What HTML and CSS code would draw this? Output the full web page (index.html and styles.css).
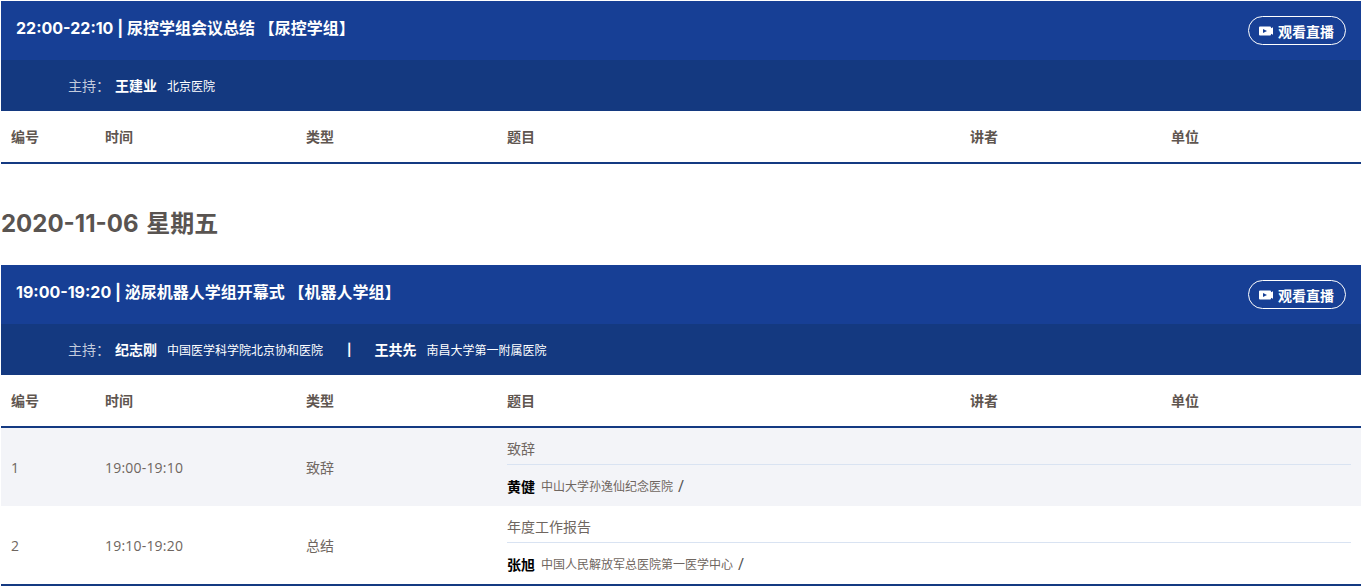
FILE: index.html
```html
<!DOCTYPE html>
<html lang="zh-CN">
<head>
<meta charset="utf-8">
<title>日程</title>
<link rel="stylesheet" href="styles.css">
</head>
<body>
<main class="page">
  <section class="session">
    <div class="session-head">
      <h3 class="session-title">22:00-22:10 | 尿控学组会议总结 【尿控学组】</h3>
      <a class="live" href="#"><svg class="live-icon" viewBox="0 0 14 10"><path fill="#fff" fill-rule="evenodd" d="M1 .5h10a1 1 0 0 1 1 1v.7l2-1v7.600l-2-1v.7a1 1 0 0 1-1 1H1a1 1 0 0 1-1-1v-7a1 1 0 0 1 1-1zM4 3v4l4-2z"/></svg>观看直播</a>
    </div>
    <div class="hosts">
      <span class="hosts-label">主持：</span>
      <b class="host-name">王建业</b><span class="host-org">北京医院</span>
    </div>
    <div class="grid head-row">
      <div class="cell">编号</div><div class="cell">时间</div><div class="cell">类型</div><div class="cell">题目</div><div class="cell">讲者</div><div class="cell">单位</div>
    </div>
  </section>

  <h2 class="date">2020-11-06 星期五</h2>

  <section class="session">
    <div class="session-head">
      <h3 class="session-title">19:00-19:20 | 泌尿机器人学组开幕式 【机器人学组】</h3>
      <a class="live" href="#"><svg class="live-icon" viewBox="0 0 14 10"><path fill="#fff" fill-rule="evenodd" d="M1 .5h10a1 1 0 0 1 1 1v.7l2-1v7.600l-2-1v.7a1 1 0 0 1-1 1H1a1 1 0 0 1-1-1v-7a1 1 0 0 1 1-1zM4 3v4l4-2z"/></svg>观看直播</a>
    </div>
    <div class="hosts">
      <span class="hosts-label">主持：</span>
      <b class="host-name">纪志刚</b><span class="host-org">中国医学科学院北京协和医院</span>
      <span class="host-sep">|</span>
      <b class="host-name">王共先</b><span class="host-org">南昌大学第一附属医院</span>
    </div>
    <div class="grid head-row">
      <div class="cell">编号</div><div class="cell">时间</div><div class="cell">类型</div><div class="cell">题目</div><div class="cell">讲者</div><div class="cell">单位</div>
    </div>
    <div class="grid row row-alt">
      <div class="cell">1</div><div class="cell time">19:00-19:10</div><div class="cell">致辞</div>
      <div class="topic">
        <div class="topic-title">致辞</div>
        <div class="speaker"><b class="speaker-name">黄健</b><span class="speaker-org">中山大学孙逸仙纪念医院</span><span class="slash">/</span></div>
      </div>
    </div>
    <div class="grid row row-last">
      <div class="cell">2</div><div class="cell time">19:10-19:20</div><div class="cell">总结</div>
      <div class="topic">
        <div class="topic-title">年度工作报告</div>
        <div class="speaker"><b class="speaker-name">张旭</b><span class="speaker-org">中国人民解放军总医院第一医学中心</span><span class="slash">/</span></div>
      </div>
    </div>
  </section>
</main>
</body>
</html>
```
FILE: styles.css
```css
* { box-sizing: border-box; }
html, body { margin: 0; padding: 0; background: #fff; overflow: hidden; }
body {
  font-family: Inter, "Noto Sans CJK SC", sans-serif;
  font-size: 13px;
  color: #5f5650;
}
.page { width: 1360px; margin: 1px 0 0 1px; }
.session-head {
  height: 59px;
  background: #173f95;
  display: flex;
  justify-content: space-between;
  padding: 0 15px;
  color: #fff;
}
.session-title { margin: 16px 0 0; font-size: 16px; line-height: 22px; font-weight: 700; }
.live {
  margin-top: 15px;
  height: 29px;
  width: 98px;
  border: 1px solid #fff;
  border-radius: 15px;
  display: flex;
  align-items: center;
  justify-content: center;
  color: #fff;
  font-size: 14px;
  font-weight: 700;
  text-decoration: none;
}
.live-icon { width: 14px; height: 10px; margin-right: 5px; margin-left: -1px; }
.hosts {
  height: 51px;
  background: #143980;
  display: flex;
  align-items: center;
  padding-left: 67px;
  color: #fff;
  font-size: 12px;
}
.hosts-label { font-size: 14px; color: #c2cbdd; width: 47px; margin-bottom: 2px; }
.host-name { font-size: 14px; margin-right: 10px; margin-bottom: 2px; }
.host-sep { margin: 0 23px 0 24px; font-size: 12px; font-weight: 700; }
.grid { display: grid; grid-template-columns: 94px 201px 201px 463px 201px 200px; }
.cell { padding: 0 10px; }
.head-row {
  height: 53px;
  padding-bottom: 2px;
  align-items: center;
  border-bottom: 2px solid #143a82;
  font-size: 14px;
  font-weight: 700;
}
.row {
  height: 78px;
  padding-bottom: 4px;
  align-items: center;
  font-family: "Open Sans", "Noto Sans CJK SC", sans-serif;
  color: #6f6660;
  font-size: 14px;
}
.time { letter-spacing: 0.2px; }
.row-alt { background: #f3f4f8; }
.row-last { border-bottom: 2px solid #143a82; height: 80px; padding-bottom: 4px; }
.topic { grid-column: 4 / 7; padding: 0 10px; align-self: start; }
.topic-title {
  height: 37px;
  line-height: 41px;
  font-size: 14px;
  border-bottom: 1px solid #d9e3f2;
}
.speaker { height: 41px; display: flex; align-items: center; }
.speaker-name { font-size: 14px; color: #000; margin-right: 6px; }
.speaker-org { font-size: 12px; color: #6f6660; }
.slash { font-size: 16px; margin-left: 5px; color: #555; }
.date {
  margin: 0;
  height: 101px;
  padding-top: 43px;
  font-size: 24px;
  line-height: 33px;
  font-weight: 700;
  word-spacing: 2px;
  color: #595451;
}
```
